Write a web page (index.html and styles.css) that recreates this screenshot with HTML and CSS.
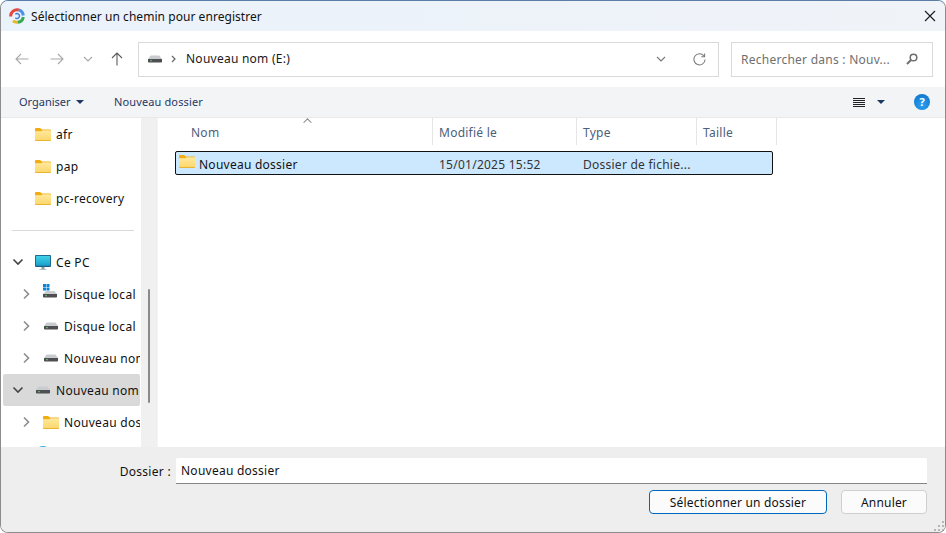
FILE: index.html
```html
<!DOCTYPE html>
<html lang="fr">
<head>
<meta charset="utf-8">
<title>Sélectionner un chemin pour enregistrer</title>
<link rel="stylesheet" href="styles.css">
</head>
<body>
<svg class="defs" width="0" height="0" aria-hidden="true">
  <defs>
    <linearGradient id="fg" x1="0" y1="0" x2="0" y2="1"><stop offset="0" stop-color="#ffe9a0"/><stop offset="1" stop-color="#fdd667"/></linearGradient>
    <linearGradient id="mg" x1="0" y1="0" x2="0" y2="1"><stop offset="0" stop-color="#3fd3e8"/><stop offset="1" stop-color="#1a9fc9"/></linearGradient>
    <symbol id="folder" viewBox="0 0 16 14">
      <path d="M0 2a1 1 0 0 1 1-1h4.200l1.600 1.600H15a1 1 0 0 1 1 1V5H0z" fill="#f0ae14"/>
      <path d="M0 4.200h6.400l1.400-1H15a1 1 0 0 1 1 1V13a1 1 0 0 1-1 1H1a1 1 0 0 1-1-1z" fill="url(#fg)"/>
      <path d="M0 13h16v.2a.8.8 0 0 1-.8.8H.8a.8.8 0 0 1-.8-.8z" fill="#e8b434"/>
    </symbol>
    <symbol id="drive" viewBox="0 0 14 8">
      <path d="M2.600 0.500h8.800L14 4H0z" fill="#c9cccf"/>
      <path d="M0 4h14v2.600a.9.9 0 0 1-.9.9H.9a.9.9 0 0 1-.9-.9z" fill="#4d4f52"/>
      <rect x="2.200" y="5.200" width="1.600" height="1" fill="#5fe06a"/>
    </symbol>
    <symbol id="chev-r" viewBox="0 0 8 12"><path d="M2 1.500 6.500 6 2 10.500" fill="none" stroke="#8c8c8c" stroke-width="1.600"/></symbol>
    <symbol id="chev-d" viewBox="0 0 12 8"><path d="M1.500 1.500 6 6l4.500-4.500" fill="none" stroke="#444" stroke-width="1.600"/></symbol>
  </defs>
</svg>

<div class="window">
  <header class="titlebar">
    <svg class="app-icon" viewBox="0 0 16 16" width="16" height="16" aria-hidden="true">
      <g fill="none" stroke-width="3">
        <path d="M1.700 8.500A6.300 6.300 0 0 1 9.800 2" stroke="#e8453c"/>
        <path d="M9.800 2A6.300 6.300 0 0 1 14.300 7.500" stroke="#4a90e8"/>
        <path d="M14.300 9A6.300 6.300 0 0 1 8.500 14.300" stroke="#35a853"/>
        <path d="M8.500 14.300A6.300 6.300 0 0 1 4 12.900" stroke="#e9b820"/>
      </g>
      <path d="M6.300 6.300A2.400 2.400 0 1 1 6.300 9.700" fill="none" stroke="#3f7fdc" stroke-width="1.400"/>
    </svg>
    <span class="title">Sélectionner un chemin pour enregistrer</span>
    <svg class="close" viewBox="0 0 12 12" width="12" height="12" aria-hidden="true"><path d="M1 1l10 10M11 1 1 11" stroke="#1a1a1a" stroke-width="1.100" fill="none"/></svg>
  </header>

  <nav class="navbar">
    <div class="nav-buttons">
      <svg class="nav-ico" viewBox="0 0 14 12" width="14" height="12" aria-hidden="true"><path d="M13.500 6H1M6 1 1 6l5 5" fill="none" stroke="#a8a8a8" stroke-width="1.100"/></svg>
      <svg class="nav-ico fwd" viewBox="0 0 14 12" width="14" height="12" aria-hidden="true"><path d="M.5 6H13M8 1l5 5-5 5" fill="none" stroke="#a8a8a8" stroke-width="1.100"/></svg>
      <svg class="nav-ico drop" viewBox="0 0 10 6" width="10" height="6" aria-hidden="true"><path d="M1 1l4 4 4-4" fill="none" stroke="#a8a8a8" stroke-width="1.100"/></svg>
      <svg class="nav-ico up" viewBox="0 0 12 14" width="12" height="14" aria-hidden="true"><path d="M6 13.500V1M1 6l5-5 5 5" fill="none" stroke="#5c5c5c" stroke-width="1.100"/></svg>
    </div>
    <div class="address">
      <svg class="addr-drive" width="14" height="8" aria-hidden="true"><use href="#drive"/></svg>
      <svg class="addr-sep" viewBox="0 0 5 8" width="5" height="8" aria-hidden="true"><path d="M1 1l3 3-3 3" fill="none" stroke="#666" stroke-width="1.200"/></svg>
      <span class="addr-text">Nouveau nom (E:)</span>
      <svg class="addr-drop" viewBox="0 0 10 6" width="10" height="6" aria-hidden="true"><path d="M1 1l4 4 4-4" fill="none" stroke="#777" stroke-width="1.100"/></svg>
      <svg class="addr-refresh" viewBox="0 0 14 14" width="13" height="13" aria-hidden="true"><path d="M11.800 3.200A6 6 0 1 0 13 7" fill="none" stroke="#777" stroke-width="1.100"/><path d="M12.500 .5v3.500H9" fill="none" stroke="#777" stroke-width="1.100"/></svg>
    </div>
    <div class="search">
      <span class="search-text">Rechercher dans : Nouv...</span>
      <svg viewBox="0 0 12 12" width="12" height="12" aria-hidden="true"><circle cx="7.500" cy="4.500" r="3.300" fill="none" stroke="#6e6e6e" stroke-width="1.500"/><path d="M5 7 1 11" stroke="#6e6e6e" stroke-width="2"/></svg>
    </div>
  </nav>

  <div class="toolbar">
    <span class="tool organiser"><span class="tool-label">Organiser</span><i class="caret"></i></span>
    <span class="tool"><span class="tool-label new-folder">Nouveau dossier</span></span>
    <span class="tool-right">
      <svg viewBox="0 0 12 9" width="12" height="9" aria-hidden="true"><path d="M0 .5h12M0 2.500h12M0 4.500h12M0 6.500h12M0 8.500h12" stroke="#222" stroke-width="1"/></svg>
      <i class="caret view-caret"></i>
      <span class="help">?</span>
    </span>
  </div>

  <main class="body">
    <aside class="tree">
      <div class="row lvl1"><svg class="fold" width="16" height="14"><use href="#folder"/></svg>afr</div>
      <div class="row lvl1"><svg class="fold" width="16" height="14"><use href="#folder"/></svg>pap</div>
      <div class="row lvl1"><svg class="fold" width="16" height="14"><use href="#folder"/></svg>pc-recovery</div>
      <div class="divider"></div>
      <div class="row lvl0">
        <svg class="tw" width="12" height="8"><use href="#chev-d"/></svg>
        <svg class="pc" viewBox="0 0 16 15" width="16" height="15" aria-hidden="true"><rect x="0" y="0" width="16" height="12" rx="1" fill="#1d5f86"/><rect x=".9" y=".9" width="14.200" height="9.800" fill="url(#mg)"/><rect x="6.500" y="12" width="3" height="2" fill="#8c9aa5"/><rect x="4.500" y="14" width="7" height="1" fill="#b4bcc4"/></svg>
        Ce PC
      </div>
      <div class="row lvl2">
        <svg class="tr" width="8" height="12"><use href="#chev-r"/></svg>
        <svg class="win-drive" viewBox="0 0 14 14" width="14" height="14" aria-hidden="true"><rect x="0" y="0" width="3" height="3" fill="#0a84d8"/><rect x="3.500" y="0" width="3" height="3" fill="#0a84d8"/><rect x="0" y="3.500" width="3" height="3" fill="#0a84d8"/><rect x="3.500" y="3.500" width="3" height="3" fill="#0a84d8"/><path d="M3 7h8.400L14 10H0z" fill="#c9cccf"/><path d="M0 10h14v2.500a.9.9 0 0 1-.9.9H.9a.9.9 0 0 1-.9-.9z" fill="#4d4f52"/><rect x="2.200" y="11.200" width="1.600" height="1" fill="#5fe06a"/></svg>
        Disque local
      </div>
      <div class="row lvl2"><svg class="tr" width="8" height="12"><use href="#chev-r"/></svg><svg class="drv" width="14" height="8"><use href="#drive"/></svg>Disque local</div>
      <div class="row lvl2"><svg class="tr" width="8" height="12"><use href="#chev-r"/></svg><svg class="drv" width="14" height="8"><use href="#drive"/></svg>Nouveau nom</div>
      <div class="row lvl0 selected"><svg class="tw" width="12" height="8"><use href="#chev-d"/></svg><svg class="drv" width="14" height="8"><use href="#drive"/></svg>Nouveau nom</div>
      <div class="row lvl2"><svg class="tr" width="8" height="12"><use href="#chev-r"/></svg><svg class="fold" width="16" height="14"><use href="#folder"/></svg>Nouveau dossier</div>
      <div class="row lvl0"><svg class="net" viewBox="0 0 16 16" width="16" height="16" aria-hidden="true"><circle cx="8" cy="8" r="8" fill="#3fa9e0"/></svg></div>
    </aside>
    <div class="scroll"><div class="thumb"></div></div>
    <section class="files">
      <div class="thead">
        <i class="sort"></i>
        <span class="th c-name"><span class="th-label">Nom</span></span>
        <span class="th c-date"><span class="th-label">Modifié le</span></span>
        <span class="th c-type"><span class="th-label">Type</span></span>
        <span class="th c-size"><span class="th-label">Taille</span></span>
      </div>
      <div class="file">
        <span class="file-name"><svg class="file-fold" width="16" height="14"><use href="#folder"/></svg><span class="cell">Nouveau dossier</span></span>
        <span class="file-date cell">15/01/2025 15:52</span>
        <span class="file-type cell">Dossier de fichie...</span>
      </div>
    </section>
  </main>

  <footer class="footer">
    <div class="field">
      <label class="field-label">Dossier :</label>
      <div class="input">Nouveau dossier</div>
    </div>
    <div class="actions">
      <button class="btn primary">Sélectionner un dossier</button>
      <button class="btn cancel">Annuler</button>
    </div>
    <svg class="grip" viewBox="0 0 11 11" width="11" height="11" aria-hidden="true"><g fill="#b5b5b5"><rect x="8" y="0" width="2" height="2"/><rect x="4" y="4" width="2" height="2"/><rect x="8" y="4" width="2" height="2"/><rect x="0" y="8" width="2" height="2"/><rect x="4" y="8" width="2" height="2"/><rect x="8" y="8" width="2" height="2"/></g></svg>
  </footer>
</div>
</body>
</html>
```

FILE: styles.css
```css
* { box-sizing: border-box; }
html, body { margin: 0; padding: 0; background: #fff; }
body { width: 946px; height: 533px; overflow: hidden; font-family: "Noto Sans", "Open Sans", sans-serif; font-size: 12px; color: #111; }
.defs { position: absolute; }
svg { display: block; flex: none; }

.window { width: 946px; height: 533px; display: flex; flex-direction: column; border: 1px solid #8c8c8c; border-top-color: #5a7ea8; border-radius: 8px; overflow: hidden; background: #fff; }

.titlebar { height: 30px; flex: none; display: flex; align-items: center; padding-left: 8px; background: linear-gradient(90deg, #eaf2fb, #f0f3f8); }
.title { margin-left: 6px; font-size: 12px; letter-spacing: .05px; color: #111; }
.close { margin-left: auto; margin-right: 9px; }

.navbar { height: 56px; flex: none; display: flex; align-items: center; background: #fff; }
.nav-buttons { width: 137px; flex: none; display: flex; align-items: center; padding-left: 14px; }
.fwd { margin-left: 21px; }
.drop { margin-left: 19px; }
.up { margin-left: 18px; }
.address { width: 581px; height: 35px; flex: none; display: flex; align-items: center; padding-left: 9px; border: 1px solid #d9d9d9; }
.addr-sep { margin-left: 9px; }
.addr-text { margin-left: 10px; margin-bottom: 2px; font-size: 12px; letter-spacing: .25px; color: #1a1a1a; }
.addr-drop { margin-left: auto; }
.addr-refresh { margin-left: 27px; margin-right: 12px; }
.search { width: 202px; height: 35px; flex: none; margin-left: 12px; display: flex; align-items: center; justify-content: space-between; padding: 0 14px 0 9px; border: 1px solid #d9d9d9; }
.search-text { color: #6f6f6f; font-size: 12px; letter-spacing: .25px; }

.toolbar { height: 31px; flex: none; display: flex; align-items: center; padding-left: 18px; background: #f3f4f6; border-bottom: 1px solid #e9e9ea; }
.tool { font-size: 11px; color: #1f3864; display: flex; align-items: center; }
.tool-label { margin-bottom: 2px; }
.new-folder { letter-spacing: .13px; }
.organiser { width: 95px; }
.caret { display: block; width: 0; height: 0; margin-left: 5px; border-left: 4px solid transparent; border-right: 4px solid transparent; border-top: 4px solid #1f3864; }
.tool-right { margin-left: auto; display: flex; align-items: center; padding-right: 15px; }
.view-caret { margin-left: 12px; }
.help { width: 16px; height: 16px; margin-left: 29px; border-radius: 50%; background: radial-gradient(circle at 50% 70%, #2aa0f0, #0a6fc9); color: #fff; font-size: 11px; font-weight: 700; line-height: 16px; text-align: center; }

.body { flex: 1; min-height: 0; display: flex; }
.tree { width: 140px; flex: none; overflow: hidden; background: #fff; padding-left: 2px; }
.row { height: 32px; width: 137px; display: flex; align-items: center; white-space: nowrap; overflow: hidden; font-size: 12px; letter-spacing: .3px; color: #111; border-radius: 2px; }
.lvl1 { padding-left: 32px; }
.lvl0 { padding-left: 9px; }
.lvl2 { padding-left: 19px; }
.fold { margin-right: 5px; }
.tw { margin-right: 11px; }
.pc { margin-right: 5px; }
.tr { margin-right: 13px; }
.win-drive { margin-right: 7px; margin-top: -6px; }
.drv { margin-left: 1px; margin-right: 6px; }
.net { margin-left: 23px; }
.selected { background: #d9d9d9; }
.divider { height: 32px; margin-left: 9px; width: 122px; background: linear-gradient(#d9d9d9, #d9d9d9) center / 100% 1px no-repeat; }
.scroll { width: 16px; flex: none; background: #f0f0f0; padding: 171px 0 0 7px; }
.thumb { width: 2px; height: 114px; background: #8a8a8a; border-radius: 1px; }

.files { flex: 1; min-width: 0; padding-left: 2px; border-left: 1px solid #f4f4f4; position: relative; }
.sort { position: absolute; left: 146px; top: 1px; width: 7px; height: 7px; border-left: 1px solid #777; border-top: 1px solid #777; transform: rotate(45deg) scale(.85); }
.thead { height: 27px; display: flex; align-items: center; }
.th { height: 27px; display: flex; align-items: center; padding-left: 6px; font-size: 12px; letter-spacing: .25px; color: #4c607a; border-right: 1px solid #e5e5e5; }
.th-label { margin-top: 2px; }
.c-name { width: 273px; padding-left: 31px; }
.c-date { width: 144px; }
.c-type { width: 120px; }
.c-size { width: 80px; }
.file { margin: 6px 0 0 15px; width: 598px; height: 24px; display: flex; align-items: center; background: #cce8ff; border: 1px solid #111; border-radius: 2px; letter-spacing: .25px; }
.cell { margin-top: 2px; }
.file-name { width: 263px; display: flex; align-items: center; padding-left: 3px; color: #111; }
.file-fold { margin-right: 4px; margin-top: -4px; }
.file-date { width: 144px; color: #333; }
.file-type { color: #333; }

.footer { height: 85px; flex: none; background: #eeeeee; padding: 11px 18px 0 0; position: relative; }
.field { display: flex; align-items: center; justify-content: flex-end; }
.field-label { margin-right: 5px; letter-spacing: .3px; color: #111; }
.input { width: 751px; height: 26px; display: flex; align-items: center; padding-left: 5px; background: #fff; letter-spacing: .25px; border-bottom: 1px solid #868686; border-radius: 2px 2px 0 0; }
.actions { display: flex; justify-content: flex-end; gap: 14px; margin-top: 6px; }
.btn { height: 24px; padding: 0; font-family: inherit; font-size: 12px; letter-spacing: .18px; color: #111; border-radius: 4px; }
.primary { width: 178px; background: #fbfbfb; border: 1px solid #0067c0; }
.cancel { width: 86px; background: #fbfbfb; border: 1px solid #cfcfcf; }
.grip { position: absolute; right: 0; bottom: 0; }
```
